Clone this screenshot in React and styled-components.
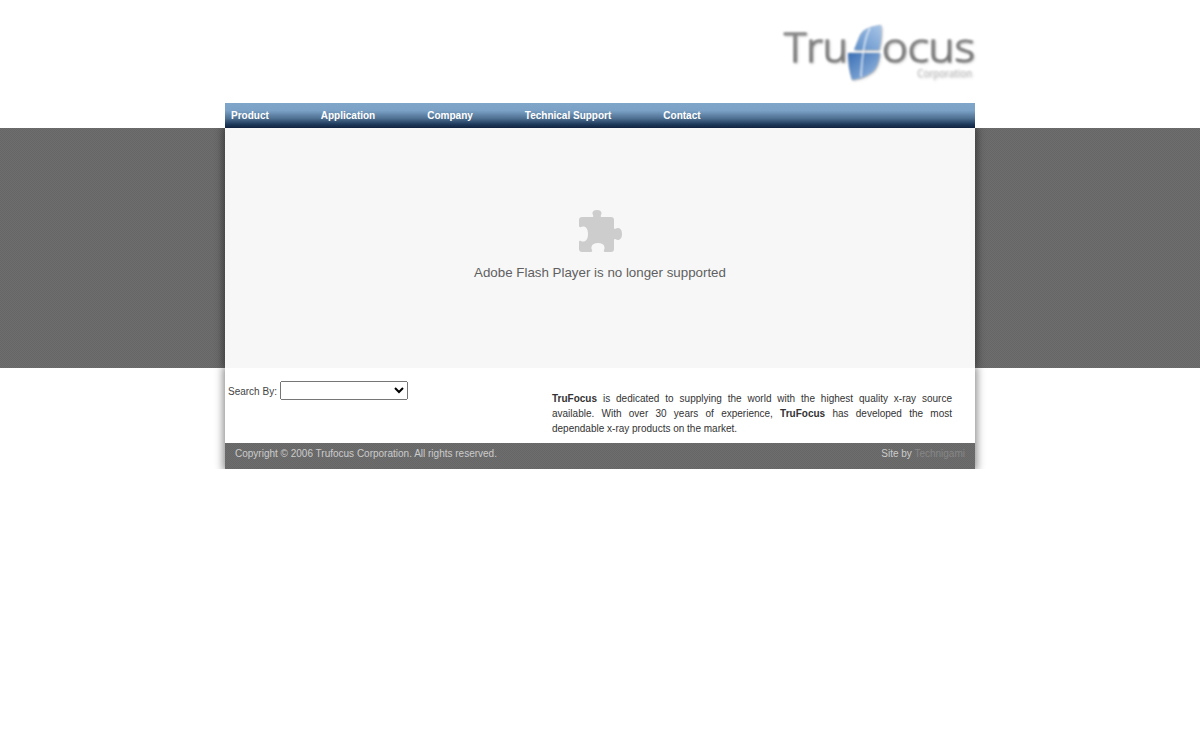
import React from "react";
import styled, { createGlobalStyle } from "styled-components";

const Global = createGlobalStyle`
  html, body { margin: 0; padding: 0; background: #fff; }
  body { font-family: "Liberation Sans", Arial, sans-serif; font-size: 10px; color: #333; }
`;

const noise = `
  repeating-conic-gradient(#6e6e6e 0 25%, #666666 0 50%) 0 0 / 2px 2px
`;

const Page = styled.div`
  min-height: 750px;
  display: flex;
  flex-direction: column;
  align-items: center;
`;

const Header = styled.header`
  width: 750px;
  height: 103px;
  display: flex;
  justify-content: flex-end;
  align-items: flex-start;
`;

const LogoSvg = styled.svg`
  display: block;
  margin-top: 15px;
  filter: blur(0.8px) drop-shadow(1px 1px 1px rgba(0, 0, 0, 0.25));
`;

const Nav = styled.nav`
  width: 750px;
  height: 25px;
  box-sizing: border-box;
  padding: 7px 0 0 6px;
  display: flex;
  gap: 52px;
  background: linear-gradient(#7fa6c9 0%, #7ba2c6 30%, #4e6f90 62%, #1e3a5c 85%, #10233f 100%);
`;

const NavLink = styled.a`
  font-weight: bold;
  font-size: 10px;
  line-height: 12px;
  color: #fff;
  text-decoration: none;
`;

const Band = styled.section`
  width: 100%;
  height: 240px;
  background: ${noise};
  display: flex;
  justify-content: center;
`;

const Column = styled.div`
  width: 750px;
  box-shadow: 0 0 8px 2px rgba(0, 0, 0, 0.45);
  clip-path: inset(0 -14px 0 -14px);
`;

const Flash = styled(Column)`
  height: 240px;
  background: #f7f7f7;
  display: flex;
  flex-direction: column;
  align-items: center;
  padding-top: 82px;
  box-sizing: border-box;
`;

const PluginIcon = styled.svg`
  display: block;
  margin-left: 1px;
  fill: #cdcdcd;
  filter: blur(0.35px);
`;

const FlashText = styled.div`
  margin-top: 13px;
  font-size: 13.33px;
  line-height: 16px;
  color: #5f5f5f;
`;

const Lower = styled(Column)`
  background: #fff;
`;

const Content = styled.div`
  height: 75px;
  display: flex;
  justify-content: space-between;
`;

const SearchForm = styled.form`
  display: flex;
  align-items: center;
  gap: 3px;
  height: 19px;
  margin: 13px 0 0 3px;
  font-size: 10px;
  color: #444;
`;

const SearchLabel = styled.span`
  margin-top: 2px;
`;

const SearchSelect = styled.select`
  width: 128px;
  height: 19px;
  font-family: "Liberation Sans", Arial, sans-serif;
  font-size: 10px;
`;

const About = styled.p`
  width: 400px;
  margin: 23px 23px 0 0;
  font-size: 10px;
  line-height: 15px;
  text-align: justify;
  color: #333;
`;

const Footer = styled.footer`
  height: 26px;
  box-sizing: border-box;
  padding: 5px 10px 0;
  display: flex;
  justify-content: space-between;
  line-height: 12px;
  color: #cccccc;
  background: ${noise};
`;

const FooterLink = styled.a`
  color: #868686;
  text-decoration: none;
`;

const navItems = ["Product", "Application", "Company", "Technical Support", "Contact"];

function Logo() {
  const word = {
    fontFamily: "'Open Sans', sans-serif",
    fontWeight: 300,
    fontSize: 41,
    fill: "url(#metal)",
    stroke: "#777777",
    strokeWidth: 1,
    lengthAdjust: "spacingAndGlyphs",
  };
  return (
    <LogoSvg width="194" height="69" viewBox="0 0 194 69" aria-label="TruFocus Corporation">
      <defs>
        <linearGradient id="metal" x1="0" y1="0" x2="0" y2="1">
          <stop offset="0" stopColor="#a8a8a8" />
          <stop offset="1" stopColor="#666666" />
        </linearGradient>
        <linearGradient id="glassTop" x1="1" y1="0" x2="0" y2="1">
          <stop offset="0" stopColor="#a9c6e8" />
          <stop offset="1" stopColor="#5f8fc8" />
        </linearGradient>
        <linearGradient id="glassLow" x1="0" y1="0" x2="1" y2="1">
          <stop offset="0" stopColor="#3a6fb5" />
          <stop offset="1" stopColor="#9dbde2" />
        </linearGradient>
      </defs>
      <text x="3" y="47" textLength="64" {...word}>Tru</text>
      <text x="101" y="47" textLength="93" {...word}>ocus</text>
      <path d="M100 10 C90 11 82 14 79 20 L73 35 L98 35 C100 28 101 18 100 10 Z" fill="url(#glassTop)" />
      <path d="M67 38 L99 38 C98 48 95 55 90 58 C84 62 78 64 71 65 C68 56 67 46 67 38 Z" fill="url(#glassLow)" />
      <path d="M89 13 C84 22 81 40 80 62" stroke="#ffffff" strokeWidth="1.4" fill="none" opacity="0.85" />
      <text x="136" y="62" fontFamily="'Open Sans', sans-serif" fontSize="10" fill="#c4c4c4" textLength="55" lengthAdjust="spacingAndGlyphs">Corporation</text>
    </LogoSvg>
  );
}

function PuzzleMark() {
  return (
    <PluginIcon width="43" height="42" viewBox="0 0 43 42" aria-hidden="true">
      <path d="M3 7 H13.5 C14.5 7 14.5 6 14 5 C13 3.5 13 0 18 0 C23 0 23 3.5 22 5 C21.5 6 21.5 7 22.5 7 H32 C34 7 35 8 35 10 V18 C35 19 36 19.2 37 18.5 C38.5 17.5 43 17.5 43 24 C43 30.5 38.5 30.5 37 29.5 C36 28.8 35 29 35 30 V39 C35 41 34 42 32 42 H26 C25 42 24.5 41 25 40 C26 38.5 26.5 33 19 33 C11.5 33 12 38.5 13 40 C13.5 41 13 42 12 42 H3 C1 42 0 41 0 39 V32 C0 31 1 30.5 2 31 C3.5 32 9 32.5 9 24 C9 15.5 3.5 16 2 17 C1 17.5 0 17 0 16 V10 C0 8 1 7 3 7 Z" />
    </PluginIcon>
  );
}

export default function App() {
  return (
    <Page>
      <Global />
      <Header><Logo /></Header>
      <Nav>
        {navItems.map((item) => <NavLink key={item} href="#">{item}</NavLink>)}
      </Nav>
      <Band>
        <Flash>
          <PuzzleMark />
          <FlashText>Adobe Flash Player is no longer supported</FlashText>
        </Flash>
      </Band>
      <Lower>
        <Content>
          <SearchForm>
            <SearchLabel>Search By:</SearchLabel>
            <SearchSelect defaultValue=""><option value=""></option></SearchSelect>
          </SearchForm>
          <About>
            <strong>TruFocus</strong> is dedicated to supplying the world with the highest quality x-ray source available. With over 30 years of experience, <strong>TruFocus</strong> has developed the most dependable x-ray products on the market.
          </About>
        </Content>
        <Footer>
          <span>Copyright © 2006 Trufocus Corporation. All rights reserved.</span>
          <span>Site by <FooterLink href="#">Technigami</FooterLink></span>
        </Footer>
      </Lower>
    </Page>
  );
}
